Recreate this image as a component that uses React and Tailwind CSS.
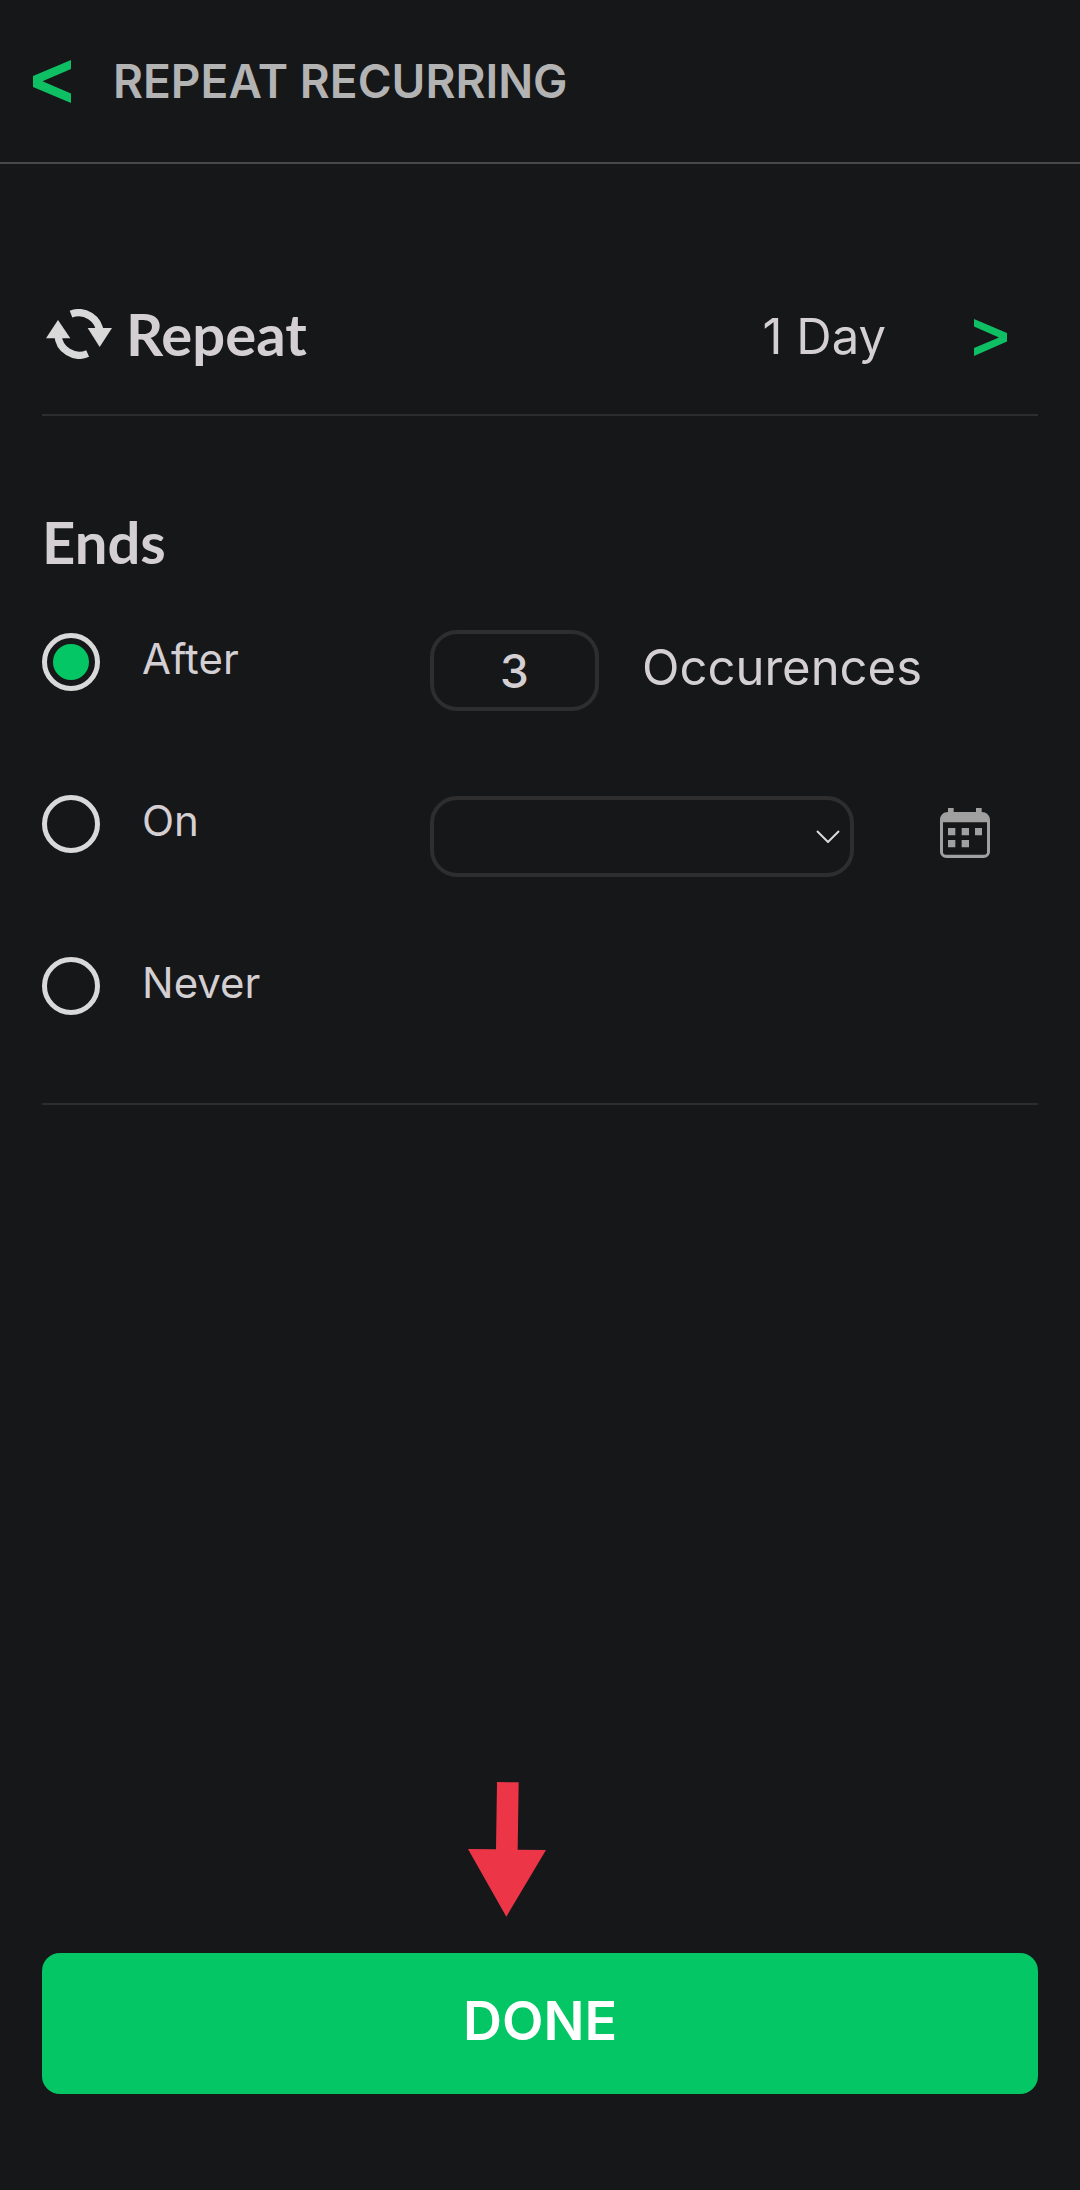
import { useState } from "react";

function BackChevron() {
  return (
    <svg viewBox="0 0 38 43" className="h-[43px] w-[38px]" fill="currentColor" aria-hidden="true">
      <polygon points="38,0 38,9 9.5,21.3 38,33.5 38,43 0,27 0,16" />
    </svg>
  );
}

function ForwardChevron() {
  return (
    <svg viewBox="0 0 33 37" className="h-[37px] w-[33px]" fill="currentColor" aria-hidden="true">
      <polygon points="0,0 33,14 33,22.5 0,37 0,29 25,18.5 0,7.5" />
    </svg>
  );
}

function RepeatIcon() {
  return (
    <svg viewBox="0 0 198 150" className="h-[50px] w-[66px] text-[#d9d9d9]" aria-hidden="true">
      <g fill="none" stroke="currentColor" strokeWidth="22">
        <path d="M75 15.500A64 64 0 0 1 162 72" />
        <path d="M125 133.500A64 64 0 0 1 36 78" />
      </g>
      <polygon fill="currentColor" points="36,33 73,88 0,88" />
      <polygon fill="currentColor" points="125,57 198,57 161,114" />
    </svg>
  );
}

function CalendarIcon() {
  return (
    <svg viewBox="0 0 150 150" className="size-[50px] text-[#a0a0a0]" fill="currentColor" aria-hidden="true">
      <path
        fillRule="evenodd"
        d="M24 0h17v12h67V0h17v12c14 0 25 10 25 24v94c0 12-8 20-20 20H20c-12 0-20-8-20-20V36C0 22 10 12 24 12ZM9 43v89q0 8 8 8h116q8 0 8-8V43Z"
      />
      <path d="M24 60h22v22H24ZM65 60h22v22H65ZM105 60h21v22h-21ZM24 96h22v22H24ZM65 96h22v22H65Z" />
    </svg>
  );
}

function Choice({ value, label, selected, onSelect }) {
  return (
    <label className="flex items-center gap-[42px]">
      <input
        type="radio"
        name="ends"
        value={value}
        checked={selected}
        onChange={() => onSelect(value)}
        className="size-[58px] shrink-0 appearance-none rounded-full border-5 border-[#d9d9d9] p-1.5 before:block before:size-full before:rounded-full checked:before:bg-[#04c664]"
      />
      <span className="pb-1.5 text-[42px] leading-12">{label}</span>
    </label>
  );
}

export default function App() {
  const [ends, setEnds] = useState("after");
  const [count, setCount] = useState("3");

  return (
    <div className="flex min-h-screen flex-col bg-[#161719] font-['Inter',sans-serif] text-[#d3cfd3]">
      <header className="flex h-[164px] items-center gap-[42px] border-b-2 border-[#48494b] pl-[33px]">
        <button type="button" aria-label="Back" className="text-[#0fbf63]">
          <BackChevron />
        </button>
        <h1 className="text-[46px] leading-14 font-semibold text-[#b3b3b3]">REPEAT RECURRING</h1>
      </header>

      <main className="flex flex-1 flex-col px-[42px] pb-24">
        <section className="mt-24 flex h-[156px] items-center justify-between border-b-2 border-[#2c2d2f] pr-[31px] pl-1">
          <div className="flex items-center gap-[14px] pb-1.5">
            <RepeatIcon />
            <h2 className="font-['Lato',sans-serif] text-[58px] leading-16 font-bold">Repeat</h2>
          </div>
          <button type="button" className="flex items-center gap-22">
            <span className="text-[49px] leading-14">1 Day</span>
            <span className="text-[#0fbf63]">
              <ForwardChevron />
            </span>
          </button>
        </section>

        <section className="border-b-2 border-[#2c2d2f] pt-[94px] pb-22">
          <h2 className="font-['Lato',sans-serif] text-[58px] leading-16 font-bold">Ends</h2>
          <div className="mt-14 flex">
            <div className="flex w-[388px] flex-col gap-26 pt-[3px]">
              <Choice value="after" label="After" selected={ends === "after"} onSelect={setEnds} />
              <Choice value="on" label="On" selected={ends === "on"} onSelect={setEnds} />
              <Choice value="never" label="Never" selected={ends === "never"} onSelect={setEnds} />
            </div>
            <div className="flex flex-col gap-[85px]">
              <div className="flex items-center gap-[43px]">
                <input
                  id="occurences"
                  type="text"
                  inputMode="numeric"
                  value={count}
                  onChange={(e) => setCount(e.target.value)}
                  className="h-[81px] w-[169px] rounded-[27px] border-4 border-[#2e2e2f] bg-transparent text-center text-[46px] font-medium"
                />
                <label htmlFor="occurences" className="pb-1.5 text-[49px] leading-14">
                  Occurences
                </label>
              </div>
              <div className="flex items-center gap-[86px]">
                <div className="relative">
                  <select
                    aria-label="End date"
                    className="block h-[81px] w-[424px] appearance-none rounded-[27px] border-4 border-[#2e2e2f] bg-transparent px-6 text-[42px]"
                  >
                    <option value="" />
                  </select>
                  <svg
                    viewBox="0 0 24 13"
                    className="pointer-events-none absolute top-[34px] right-3.5 h-[13px] w-6 text-[#d9d9d9]"
                    fill="none"
                    stroke="currentColor"
                    strokeWidth="2"
                    aria-hidden="true"
                  >
                    <path d="M1 1l11 11L23 1" />
                  </svg>
                </div>
                <button type="button" aria-label="Open calendar" className="pb-2">
                  <CalendarIcon />
                </button>
              </div>
            </div>
          </div>
        </section>

        <div className="mt-auto">
          <svg viewBox="84 66 234 405" className="mb-9 ml-[426px] h-[135px] w-[78px] text-[#ec3648]" fill="currentColor" aria-hidden="true">
            <polygon points="171,66 236,67 233,269 318,270 199,470 84,267 168,268" />
          </svg>
          <button
            type="button"
            className="h-[141px] w-full rounded-[18px] bg-[#04c664] pb-1.5 text-[54px] leading-16 font-semibold text-white"
          >
            DONE
          </button>
        </div>
      </main>
    </div>
  );
}
